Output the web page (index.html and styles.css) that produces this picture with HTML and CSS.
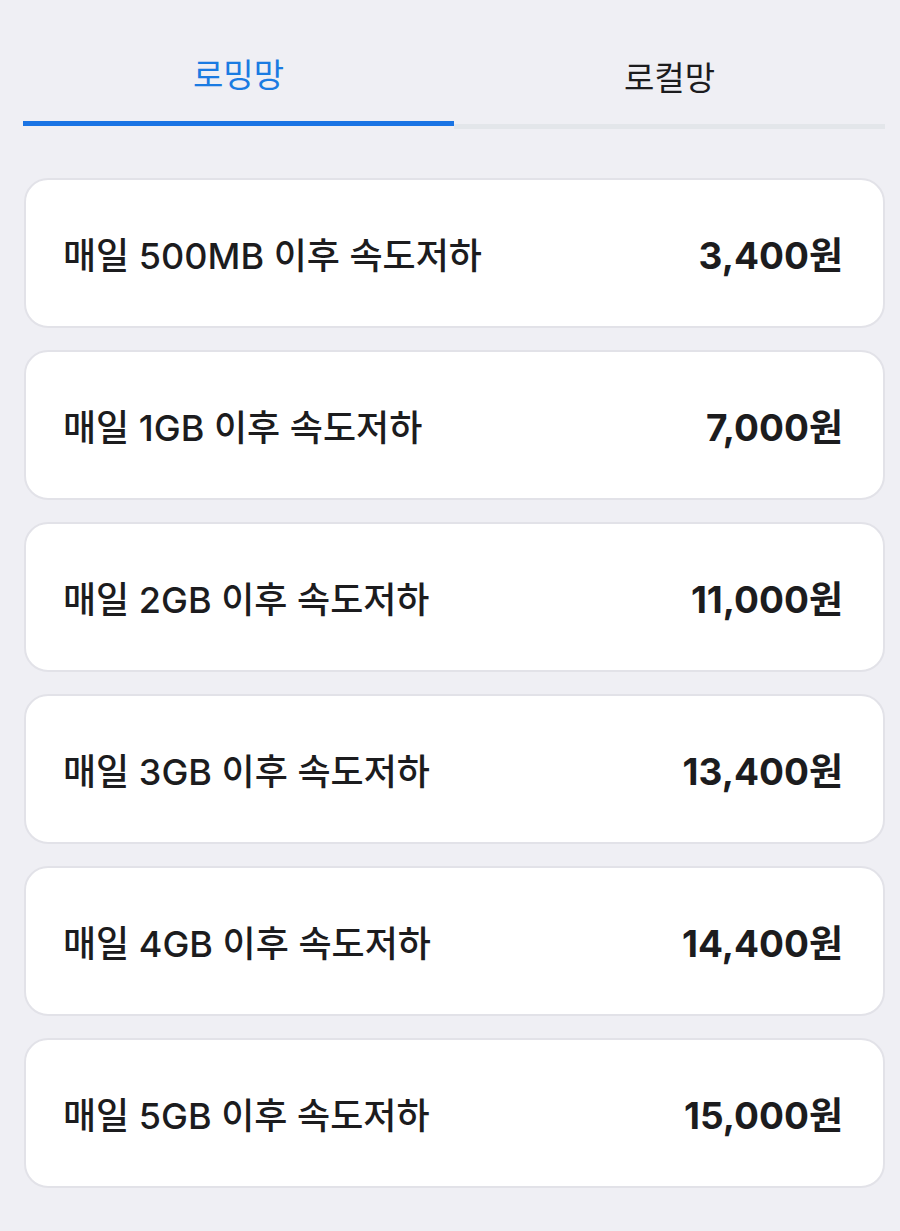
FILE: index.html
```html
<!DOCTYPE html>
<html lang="ko">
<head>
    <meta charset="UTF-8">
    <meta name="viewport" content="width=device-width, initial-scale=1.0">
    <title>데이터 요금제</title>
    <link rel="stylesheet" href="styles.css">
</head>
<body>
    <div class="page">
        <div class="tabs">
            <a href="#" class="tab active">로밍망</a>
            <a href="#" class="tab">로컬망</a>
        </div>

        <div class="plans">
            <div class="plan">
                <span class="plan-name">매일 500MB 이후 속도저하</span>
                <span class="plan-price">3,400원</span>
            </div>
            <div class="plan">
                <span class="plan-name">매일 1GB 이후 속도저하</span>
                <span class="plan-price">7,000원</span>
            </div>
            <div class="plan">
                <span class="plan-name">매일 2GB 이후 속도저하</span>
                <span class="plan-price">11,000원</span>
            </div>
            <div class="plan">
                <span class="plan-name">매일 3GB 이후 속도저하</span>
                <span class="plan-price">13,400원</span>
            </div>
            <div class="plan">
                <span class="plan-name">매일 4GB 이후 속도저하</span>
                <span class="plan-price">14,400원</span>
            </div>
            <div class="plan">
                <span class="plan-name">매일 5GB 이후 속도저하</span>
                <span class="plan-price">15,000원</span>
            </div>
        </div>
    </div>
</body>
</html>
```

FILE: styles.css
```css
body {
    margin: 0;
    background-color: #efeff4;
    font-family: Inter, "Noto Sans CJK KR", sans-serif;
    color: #1c1c1e;
}
.page {
    padding: 0 15px 40px 23px;
}
.tabs {
    display: flex;
    align-items: flex-start;
}
.tab {
    flex: 1;
    display: block;
    text-align: center;
    text-decoration: none;
    color: #1c1c1e;
    font-size: 33px;
    line-height: 44px;
    padding: 56px 0 24px;
    border-bottom: 5px solid #e3e6ea;
}
.tab.active {
    color: #1a7be2;
    padding-top: 53px;
    padding-bottom: 24px;
    border-bottom-color: #1a74e4;
}
.plans {
    display: flex;
    flex-direction: column;
    gap: 22px;
    margin-top: 49px;
    padding-left: 1px;
}
.plan {
    display: flex;
    justify-content: space-between;
    align-items: center;
    height: 146px;
    padding: 0 40px 0 37px;
    background: #fff;
    border: 2px solid #e2e2e8;
    border-radius: 24px;
}
.plan-name {
    font-size: 36px;
    font-weight: 500;
}
.plan-price {
    font-size: 37px;
    font-weight: 700;
}
```
